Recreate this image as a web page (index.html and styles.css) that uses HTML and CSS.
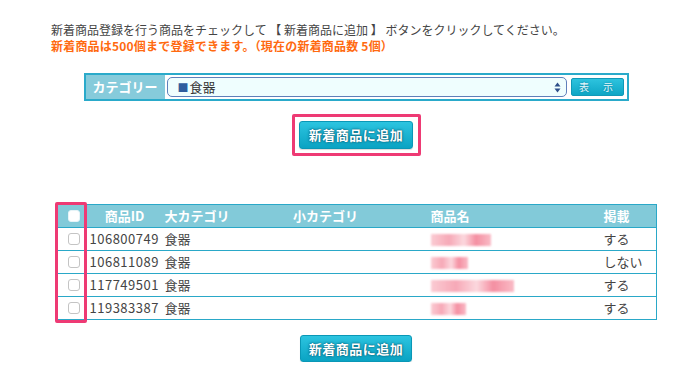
FILE: index.html
```html
<!DOCTYPE html>
<html lang="ja">
<head>
<meta charset="utf-8">
<title>新着商品登録</title>
<link rel="stylesheet" href="styles.css">
</head>
<body>
<div class="page">
  <div class="intro">
    <p class="line">新着商品登録を行う商品をチェックして 【 新着商品に追加 】 ボタンをクリックしてください。</p>
    <p class="line warn">新着商品は500個まで登録できます。（現在の新着商品数 5個）</p>
  </div>

  <div class="main">
    <div class="catbar">
      <div class="catlabel">カテゴリー</div>
      <div class="catselect">
        <span class="sq">■</span>食器
        <svg class="arrows" width="7" height="11" viewBox="0 0 7 11"><path d="M3.5 0.5 L6.5 4.5 L0.5 4.5 Z M3.5 10.5 L6.5 6.5 L0.5 6.5 Z" fill="#2d4f8a"/></svg>
      </div>
      <div class="showbtn">表　示</div>
    </div>

    <div class="addwrap highlight">
      <div class="btn addbtn">新着商品に追加</div>
    </div>

    <div class="tablewrap">
      <table class="items">
        <colgroup>
          <col class="c1"><col class="c2"><col class="c3"><col class="c4"><col class="c5"><col class="c6">
        </colgroup>
        <thead>
          <tr>
            <th class="chk"><span class="cb hd"></span></th>
            <th class="center">商品ID</th>
            <th class="cat">大カテゴリ</th>
            <th class="center">小カテゴリ</th>
            <th class="name">商品名</th>
            <th class="pub">掲載</th>
          </tr>
        </thead>
        <tbody>
          <tr>
            <td class="chk"><span class="cb"></span></td>
            <td class="id">106800749</td>
            <td class="cat">食器</td>
            <td></td>
            <td class="name"><span class="blur" style="width:60px"></span></td>
            <td class="pub">する</td>
          </tr>
          <tr>
            <td class="chk"><span class="cb"></span></td>
            <td class="id">106811089</td>
            <td class="cat">食器</td>
            <td></td>
            <td class="name"><span class="blur" style="width:37px"></span></td>
            <td class="pub">しない</td>
          </tr>
          <tr>
            <td class="chk"><span class="cb"></span></td>
            <td class="id">117749501</td>
            <td class="cat">食器</td>
            <td></td>
            <td class="name"><span class="blur" style="width:83px"></span></td>
            <td class="pub">する</td>
          </tr>
          <tr>
            <td class="chk"><span class="cb"></span></td>
            <td class="id">119383387</td>
            <td class="cat">食器</td>
            <td></td>
            <td class="name"><span class="blur" style="width:35px"></span></td>
            <td class="pub">する</td>
          </tr>
        </tbody>
      </table>
      <div class="colmark"></div>
    </div>

    <div class="addwrap">
      <div class="btn addbtn bottom">新着商品に追加</div>
    </div>
  </div>
</div>
</body>
</html>
```

FILE: styles.css
```css
html, body {
  margin: 0;
  padding: 0;
  background: #ffffff;
}

body {
  font-family: "Noto Sans CJK JP", "Liberation Sans", sans-serif;
  color: #444444;
}

.page {
  width: 700px;
}

.intro {
  padding: 22px 0 0 51px;
}

.line {
  margin: 0;
  font-size: 12px;
  line-height: 16px;
  height: 16px;
  white-space: nowrap;
}

.warn {
  color: #ff6a10;
  font-weight: bold;
  letter-spacing: 0.2px;
}

.main {
  width: 600px;
  margin-left: 56px;
}

/* category bar */
.catbar {
  margin: 19px auto 0;
  width: 541px;
  height: 24px;
  border: 2px solid #2aaaca;
  display: flex;
  align-items: center;
  background: #ffffff;
}

.catlabel {
  width: 79px;
  height: 24px;
  background: #86cbdb;
  color: #ffffff;
  font-weight: bold;
  font-size: 13px;
  line-height: 24px;
  text-align: center;
}

.catselect {
  margin-left: 2px;
  width: 388px;
  height: 18px;
  padding-left: 10px;
  border: 1px solid #5f7fba;
  border-radius: 5px;
  background: #effefe;
  font-size: 13px;
  line-height: 18px;
  color: #333333;
  display: flex;
  align-items: center;
  position: relative;
}

.sq {
  color: #2f5d9e;
  font-size: 11px;
  margin-right: 1px;
}

.arrows {
  position: absolute;
  right: 5px;
  top: 4px;
}

.showbtn {
  margin-left: 4px;
  width: 51px;
  height: 16px;
  border: 1px solid #1199b8;
  border-radius: 2px;
  background: linear-gradient(#2dc3de, #0ea6c5);
  color: #e8fbff;
  font-size: 10px;
  line-height: 16px;
  text-align: center;
  letter-spacing: 2px;
  text-shadow: 0 0 2px #087390;
}

/* add button */
.addwrap {
  display: flex;
  justify-content: center;
}

.highlight {
  width: 115px;
  margin: 13px auto 0;
  padding: 4px 4px 4px 4px;
  border: 3px solid #ee3a74;
  border-radius: 2px;
}

.btn {
  box-sizing: border-box;
  width: 114px;
  height: 28px;
  border: 1px solid #0a97b6;
  border-radius: 3px;
  background: linear-gradient(#2cc4e0, #0aa3c3);
  color: #ffffff;
  font-weight: bold;
  font-size: 13px;
  line-height: 26px;
  text-align: center;
  letter-spacing: 0.5px;
  text-shadow: 0 0 3px #045a72, 0 0 1px #045a72;
  box-shadow: 0 1px 1px rgba(0, 0, 0, 0.15);
}

.btn.bottom {
  width: 112px;
  height: 27px;
  margin-top: 15px;
}

/* table */
.tablewrap {
  position: relative;
  margin-top: 48px;
}

.items {
  width: 600px;
  table-layout: fixed;
  border-collapse: collapse;
  border: 1px solid #2aa8c8;
  font-size: 13px;
}

.c1 { width: 31px; }
.c2 { width: 74px; }
.c3 { width: 68px; }
.c4 { width: 192px; }
.c5 { width: 174px; }
.c6 { width: 61px; }

.items th {
  background: #82cad9;
  color: #ffffff;
  font-weight: bold;
  height: 22px;
  padding: 0;
  text-align: left;
  line-height: 22px;
  white-space: nowrap;
}

.items td {
  height: 22px;
  padding: 0;
  line-height: 22px;
  border-top: 1px solid #2aa8c8;
  color: #444444;
  white-space: nowrap;
}

.items .center {
  text-align: center;
}

.items .chk {
  text-align: center;
  padding-left: 3px;
}

.items .id {
  padding-left: 2px;
  letter-spacing: 0.5px;
}

.items .cat {
  padding-left: 3px;
}

.items .name {
  padding-left: 9px;
}

.items .pub {
  padding-left: 8px;
}

.cb {
  display: inline-block;
  box-sizing: border-box;
  width: 12px;
  height: 12px;
  border: 1px solid #c4c4c4;
  border-radius: 3px;
  background: #ffffff;
  vertical-align: middle;
  margin-top: -2px;
}

.cb.hd {
  border-color: #e6f4f8;
}

.blur {
  display: inline-block;
  height: 12px;
  vertical-align: middle;
  margin-top: -1px;
  background: linear-gradient(90deg, #fbc3cc, #f59aab 30%, #fcd2d9 55%, #f37c92 75%, #f9b0bd);
  filter: blur(1px);
  opacity: 0.85;
}

.colmark {
  position: absolute;
  left: -1px;
  top: -2px;
  width: 26px;
  height: 115px;
  border: 3px solid #ee3a74;
  border-radius: 2px;
}
```
